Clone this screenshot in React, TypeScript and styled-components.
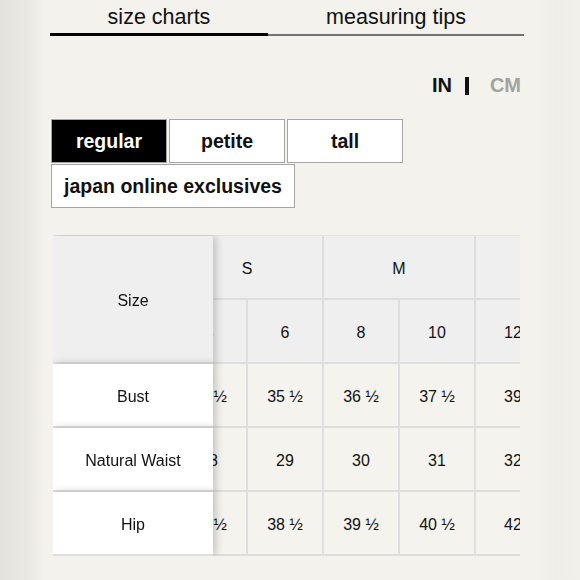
import React, { useLayoutEffect, useRef } from "react";
import styled, { createGlobalStyle } from "styled-components";

const Global = createGlobalStyle`
  html, body { margin: 0; padding: 0; }
  body {
    width: 580px;
    height: 580px;
    overflow: hidden;
    font-family: "Liberation Sans", Arial, Helvetica, sans-serif;
    color: #111;
    background: linear-gradient(to right, #e3e2dd 0px, #e9e8e3 28px, #efeee9 38px, #f3f2ec 44px, #f3f2ec 536px, #eeede8 556px, #f1f0eb 580px);
  }
`;

const Page = styled.div`
  padding-left: 50px;
  width: 474px;
`;

const TabBar = styled.div`
  display: flex;
  align-items: flex-end;
`;

const Tab = styled.div<{ $active?: boolean; $w: number }>`
  width: ${(p) => p.$w}px;
  text-align: center;
  font-size: 21.5px;
  line-height: 24px;
  padding-top: 5px;
  padding-bottom: ${(p) => (p.$active ? 4 : 5)}px;
  border-bottom: ${(p) => (p.$active ? "3px solid #050505" : "2px solid #727272")};
  color: #111;
`;

const Units = styled.div`
  margin-top: 37px;
  display: flex;
  justify-content: flex-end;
  align-items: center;
  padding-right: 3px;
  font-size: 20px;
  font-weight: 700;
  line-height: 24px;
`;

const Unit = styled.span<{ $on?: boolean }>`
  color: ${(p) => (p.$on ? "#111" : "#a2a2a2")};
`;

const Divider = styled.span`
  width: 4px;
  height: 18px;
  background: #111;
  margin: 1px 21px 0 13px;
`;

const FitRow = styled.div`
  margin-top: 22px;
  margin-left: 1px;
  width: 360px;
  display: flex;
  flex-wrap: wrap;
  column-gap: 2px;
  row-gap: 1px;
`;

const FitButton = styled.div<{ $active?: boolean; $w: number }>`
  box-sizing: border-box;
  width: ${(p) => p.$w}px;
  height: 44px;
  border: 1px solid #a6a6a6;
  background: ${(p) => (p.$active ? "#000" : "#fff")};
  color: ${(p) => (p.$active ? "#fff" : "#111")};
  font-size: 19.5px;
  font-weight: 700;
  line-height: 42px;
  text-align: center;
`;

const TableClip = styled.div`
  margin-top: 27px;
  margin-left: 3px;
  width: 467px;
  overflow: hidden;
`;

const Grid = styled.div<{ $cols: number }>`
  display: grid;
  grid-template-columns: 160px repeat(${(p) => p.$cols}, 76px);
  grid-template-rows: repeat(5, 64px);
  width: max-content;
  border-top: 1px solid #e4e4e4;
  border-left: 1px solid #e4e4e4;
`;

const Cell = styled.div<{ $head?: boolean }>`
  box-sizing: border-box;
  display: flex;
  align-items: center;
  justify-content: center;
  padding-top: 4px;
  background: ${(p) => (p.$head ? "#efefef" : "#f4f3ed")};
  border-right: 2px solid #dedede;
  border-bottom: 2px solid #dedede;
  font-size: 16px;
  color: #111;
  white-space: nowrap;
`;

const StickyCell = styled(Cell)<{ $head?: boolean }>`
  position: sticky;
  left: 0;
  z-index: 2;
  background: ${(p) => (p.$head ? "#efefef" : "#ffffff")};
  border-right: none;
  box-shadow: 3px 0 8px rgba(0, 0, 0, 0.2);
`;

const groups: { label: string; sizes: string[] }[] = [
  { label: "XXS", sizes: ["00"] },
  { label: "XS", sizes: ["0", "2"] },
  { label: "S", sizes: ["4", "6"] },
  { label: "M", sizes: ["8", "10"] },
  { label: "L", sizes: ["12", "14"] },
  { label: "XL", sizes: ["16"] },
];

const rows: { label: string; values: string[] }[] = [
  { label: "Bust", values: ["31 ½", "32 ½", "33 ½", "34 ½", "35 ½", "36 ½", "37 ½", "39", "40 ½", "42"] },
  { label: "Natural Waist", values: ["25", "26", "27", "28", "29", "30", "31", "32", "34", "35 ½"] },
  { label: "Hip", values: ["35 ½", "36 ½", "37 ½", "37 ½", "38 ½", "39 ½", "40 ½", "42", "43 ½", "45"] },
];

export default function App() {
  const clip = useRef<HTMLDivElement>(null);
  useLayoutEffect(() => {
    if (clip.current) clip.current.scrollLeft = 270;
  }, []);
  const allSizes = groups.flatMap((g) => g.sizes);
  return (
    <>
      <Global />
      <Page>
        <TabBar>
          <Tab $active $w={218}>size charts</Tab>
          <Tab $w={256}>measuring tips</Tab>
        </TabBar>
        <Units>
          <Unit $on>IN</Unit>
          <Divider />
          <Unit>CM</Unit>
        </Units>
        <FitRow>
          <FitButton $active $w={116}>regular</FitButton>
          <FitButton $w={116}>petite</FitButton>
          <FitButton $w={116}>tall</FitButton>
          <FitButton $w={244}>japan online exclusives</FitButton>
        </FitRow>
        <TableClip ref={clip}>
          <Grid $cols={allSizes.length}>
            <StickyCell $head style={{ gridRow: "1 / span 2" }}>Size</StickyCell>
            {groups.map((g) => (
              <Cell $head key={g.label} style={{ gridColumn: `span ${g.sizes.length}` }}>
                {g.label}
              </Cell>
            ))}
            {allSizes.map((s) => (
              <Cell $head key={"s" + s}>{s}</Cell>
            ))}
            {rows.map((r) => (
              <React.Fragment key={r.label}>
                <StickyCell>{r.label}</StickyCell>
                {r.values.map((v, i) => (
                  <Cell key={i}>{v}</Cell>
                ))}
              </React.Fragment>
            ))}
          </Grid>
        </TableClip>
      </Page>
    </>
  );
}
